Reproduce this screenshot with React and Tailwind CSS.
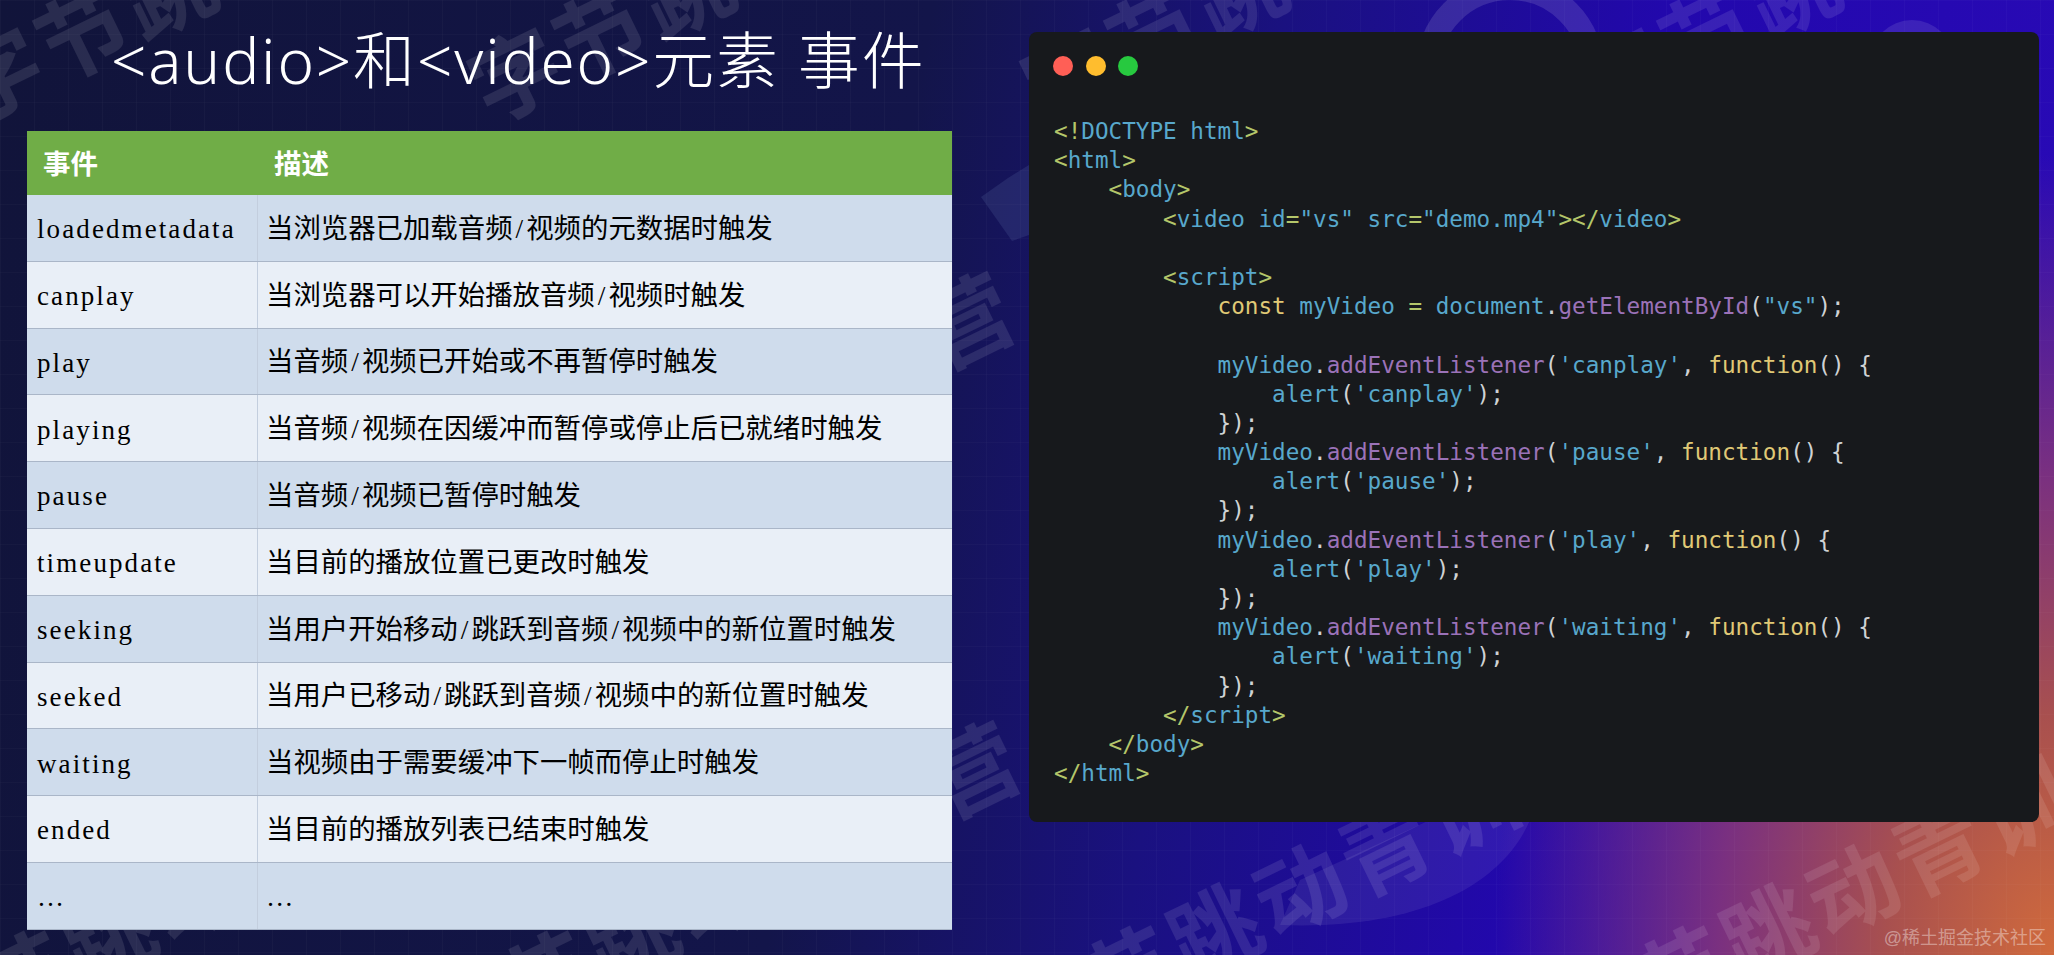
import React from "react";

const rows = [
  ["loadedmetadata", "当浏览器已加载音频/视频的元数据时触发"],
  ["canplay", "当浏览器可以开始播放音频/视频时触发"],
  ["play", "当音频/视频已开始或不再暂停时触发"],
  ["playing", "当音频/视频在因缓冲而暂停或停止后已就绪时触发"],
  ["pause", "当音频/视频已暂停时触发"],
  ["timeupdate", "当目前的播放位置已更改时触发"],
  ["seeking", "当用户开始移动/跳跃到音频/视频中的新位置时触发"],
  ["seeked", "当用户已移动/跳跃到音频/视频中的新位置时触发"],
  ["waiting", "当视频由于需要缓冲下一帧而停止时触发"],
  ["ended", "当目前的播放列表已结束时触发"],
  ["…", "…"],
];

// watermark strips behind the slide
const marks = [
  "left-[-45px] top-[40px]",
  "left-[473px] top-[40px]",
  "left-[1026px] top-[40px]",
  "left-[1579px] top-[40px]",
  "left-[412px] top-[536px]",
  "left-[-105px] top-[985px]",
  "left-[418px] top-[985px]",
  "left-[1001px] top-[980px]",
  "left-[1554px] top-[980px]",
];

const G = ({ children }) => <span className="text-[#b4c66a]">{children}</span>;
const B = ({ children }) => <span className="text-[#58a8cc]">{children}</span>;
const Y = ({ children }) => <span className="text-[#e0c976]">{children}</span>;
const P = ({ children }) => <span className="text-[#9b72b8]">{children}</span>;
const W = ({ children }) => <span className="text-[#cfd2d4]">{children}</span>;

const listener = (name, pad) => (
  <>
    {pad}
    <B>myVideo</B>
    <W>.</W>
    <P>addEventListener</P>
    <W>(</W>
    <B>'{name}'</B>
    <W>, </W>
    <Y>function</Y>
    <W>() {"{"}</W>
  </>
);

const alertLine = (name, pad) => (
  <>
    {pad}
    <B>alert</B>
    <W>(</W>
    <B>'{name}'</B>
    <W>);</W>
  </>
);

const close = <W>{"            });"}</W>;

const code = [
  <>
    <G>{"<!"}</G>
    <B>DOCTYPE html</B>
    <G>{">"}</G>
  </>,
  <>
    <G>{"<"}</G>
    <B>html</B>
    <G>{">"}</G>
  </>,
  <>
    {"    "}
    <G>{"<"}</G>
    <B>body</B>
    <G>{">"}</G>
  </>,
  <>
    {"        "}
    <G>{"<"}</G>
    <B>video id</B>
    <G>=</G>
    <B>"vs" src</B>
    <G>=</G>
    <B>"demo.mp4"</B>
    <G>{"></"}</G>
    <B>video</B>
    <G>{">"}</G>
  </>,
  " ",
  <>
    {"        "}
    <G>{"<"}</G>
    <B>script</B>
    <G>{">"}</G>
  </>,
  <>
    {"            "}
    <Y>const</Y>
    <B> myVideo </B>
    <G>=</G>
    <B> document</B>
    <W>.</W>
    <P>getElementById</P>
    <W>(</W>
    <B>"vs"</B>
    <W>);</W>
  </>,
  " ",
  listener("canplay", "            "),
  alertLine("canplay", "                "),
  close,
  listener("pause", "            "),
  alertLine("pause", "                "),
  close,
  listener("play", "            "),
  alertLine("play", "                "),
  close,
  listener("waiting", "            "),
  alertLine("waiting", "                "),
  close,
  <>
    {"        "}
    <G>{"</"}</G>
    <B>script</B>
    <G>{">"}</G>
  </>,
  <>
    {"    "}
    <G>{"</"}</G>
    <B>body</B>
    <G>{">"}</G>
  </>,
  <>
    <G>{"</"}</G>
    <B>html</B>
    <G>{">"}</G>
  </>,
];

// the slash in the description column is half an em wide
function Desc({ text }) {
  const parts = text.split("/");
  return (
    <>
      {parts.map((part, i) => (
        <React.Fragment key={i}>
          {i > 0 && <span className="inline-block w-[0.5em] text-center">/</span>}
          {part}
        </React.Fragment>
      ))}
    </>
  );
}

function App() {
  return (
    <div className="relative flex w-[2054px] h-[955px] overflow-hidden bg-[radial-gradient(ellipse_560px_800px_at_100%_100%,#d06a3c_0%,#a8504f_30%,#7a3080_60%,transparent_100%),linear-gradient(100deg,#11143a_0%,#13154a_42%,#1a1180_58%,#2208ac_75%,#2a0ab8_100%)] font-['Liberation_Serif','Noto_Sans_CJK_SC',serif]">
      {/* faint grid */}
      <div className="absolute inset-0 bg-[linear-gradient(90deg,rgba(255,255,255,0.022)_1px,transparent_1px),linear-gradient(rgba(255,255,255,0.018)_1px,transparent_1px)] bg-[size:34px_34px]" />

      {/* logo shapes in the background */}
      <svg className="absolute inset-0" width="2054" height="955" fill="none">
        <circle cx="1510" cy="70" r="82" stroke="#fff" strokeOpacity="0.12" strokeWidth="24" />
        <circle cx="1912" cy="62" r="42" fill="#fff" fillOpacity="0.1" />
        <path d="M1530 820 C1500 890 1410 930 1280 925 L1300 880 L1430 820 Z" fill="#fff" fillOpacity="0.07" />
        <path d="M981 197 L1008 178 L1029 165 L1029 235 L1012 241 Z" fill="#7f9fd0" fillOpacity="0.14" />
      </svg>

      {/* watermark */}
      {marks.map((pos) => (
        <div
          key={pos}
          className={`absolute ${pos} origin-left -rotate-[26deg] whitespace-nowrap text-[90px] leading-[100px] tracking-[5px] font-bold text-white/[0.1] font-['Noto_Sans_CJK_SC',sans-serif]`}
        >
          字节跳动青训营
        </div>
      ))}

      {/* Left side */}
      <div className="relative ml-[27px] w-[925px] flex flex-col">
        <h1 className="h-[131px] pt-[18px] pl-[84px] text-[62px] leading-[84px] font-light tracking-[1.85px] text-white whitespace-nowrap font-['Noto_Sans','Noto_Sans_CJK_SC',sans-serif]">
          {"<audio>和<video>元素 事件"}
        </h1>
        <div className="h-[64px] flex items-center pt-[3px] bg-[#70ad47] text-white font-bold text-[27.5px] font-['Liberation_Sans','Noto_Sans_CJK_SC',sans-serif]">
          <div className="w-[231px] pl-[16px]">事件</div>
          <div className="pl-[16px]">描述</div>
        </div>
        {rows.map(([name, desc], i) => (
          <div
            key={name}
            className={
              i % 2 === 0
                ? "h-[66.8px] flex items-center bg-[#cfdcec] border-b border-[#aab6c8] text-black"
                : "h-[66.8px] flex items-center bg-[#e9eff7] border-b border-[#aab6c8] text-black"
            }
          >
            <div className="w-[231px] h-full flex items-center pl-[10px] pt-[3px] border-r border-[#c3cede] text-[27px] tracking-[2.1px]">
              {name}
            </div>
            <div className="pl-[8px] pt-[3px] text-[27.4px]">
              <Desc text={desc} />
            </div>
          </div>
        ))}
      </div>

      {/* Code card */}
      <div className="relative ml-[77px] mt-[32px] w-[1010px] h-[790px] rounded-lg bg-[#17191c] pt-[24px] pl-[24px]">
        <div className="flex gap-[12.5px]">
          <span className="w-[20px] h-[20px] rounded-full bg-[#ff5f56]" />
          <span className="w-[20px] h-[20px] rounded-full bg-[#ffbd2e]" />
          <span className="w-[20px] h-[20px] rounded-full bg-[#27c93f]" />
        </div>
        <pre className="mt-[41px] ml-[1px] font-['DejaVu_Sans_Mono',monospace] text-[22.65px] leading-[29.2px]">
          {code.map((line, i) => (
            <div key={i} className="h-[29.2px]">
              {line}
            </div>
          ))}
        </pre>
      </div>

      <div className="absolute right-[8px] top-[926px] text-[18px] leading-[24px] text-white/40 font-['Liberation_Sans','Noto_Sans_CJK_SC',sans-serif]">
        @稀土掘金技术社区
      </div>
    </div>
  );
}

export default App;
